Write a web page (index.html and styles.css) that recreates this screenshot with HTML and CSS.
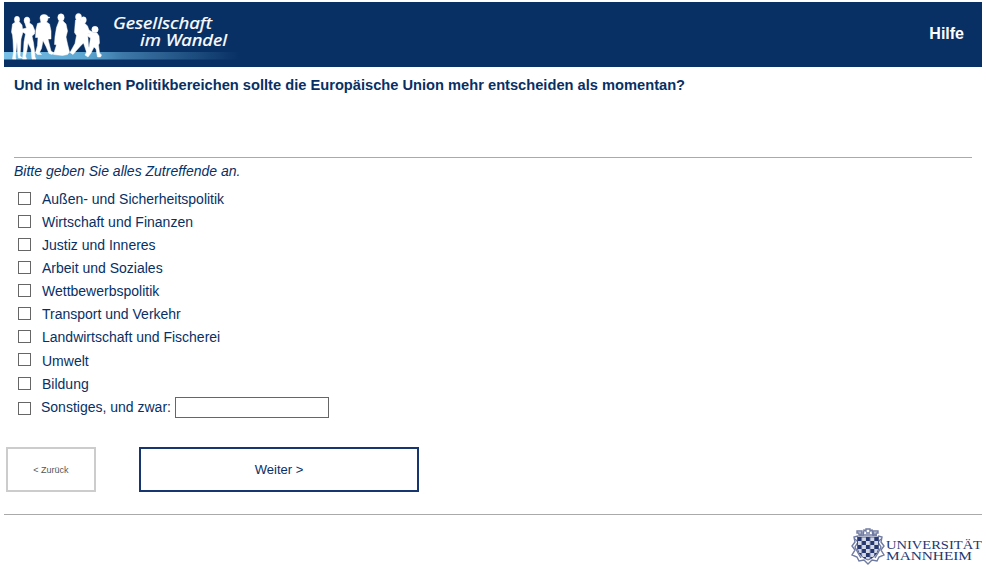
FILE: index.html
```html
<!DOCTYPE html>
<html lang="de">
<head>
<meta charset="utf-8">
<title>Gesellschaft im Wandel</title>
<link rel="stylesheet" href="styles.css">
</head>
<body>
<header class="banner">
  <svg class="brand" viewBox="4 2 240 65" role="img" aria-label="Gesellschaft im Wandel">
    <defs>
      <linearGradient id="band" x1="0" x2="1"><stop offset="0" stop-color="#78c0e8"/><stop offset=".36" stop-color="#5ba4d0"/><stop offset=".5" stop-color="#3e79a9"/><stop offset="1" stop-color="#083064"/></linearGradient>
    </defs>
    <rect x="4" y="52" width="236" height="7.500" fill="url(#band)"/>
    <g fill="#fff" stroke="#fff" stroke-width=".5" stroke-linejoin="round">
      <ellipse cx="17" cy="19.500" rx="2.600" ry="3.200"/>
      <path d="M15.500 22h4l2.500 3 1 7-2 7-.5 10-.5 7 2.500 2h-4l-1-6-.5-10-1 10-.5 5 .5 2h-3.500l1-7-.5-12-.5-5-1-3 1-8z"/>
      <ellipse cx="27" cy="20.500" rx="2.900" ry="3.500"/>
      <path d="M25 23.500l4.500-.5 3 2 2.500 6-.5 3-2.500 2 1.500 7 1 8 .5 6 1 2h-4l-1-10-3-6-1 7-1.500 6 1 3h-4l1-8 .5-9 1.500-8-4-3 1-2 4-1z"/>
      <path d="M40 18q0-3.500 4-3.500 3.500 0 4 2.500h1.500v1H48q0 2.500-1.500 4l3 2 1.500 7v8h-3l1.500 6 1.500 6 3 2-2 1.500-3-1-3-7-3-6-1.500 8-2 4 2 2h-4l-2-2 2-7 .5-8h-2.500l.5-8 1.500-6 3.500-1z"/>
      <ellipse cx="61" cy="17.500" rx="3.200" ry="3.700"/>
      <path d="M59 21h4l3 3 1.500 7-1.500 6 1.500 7 2 8-2 2.500-5 1-9-1 2.500-8 1.500-9-1 7h-2l.5-8 1.500-9z"/>
      <ellipse cx="78.500" cy="17" rx="3" ry="3.600"/>
      <ellipse cx="83.500" cy="20" rx="2.800" ry="3.200"/>
      <path d="M75.500 20h5l4 3 3 3 1.500 4 5 3-1 2-5.500-2 .5 6 .5 7 2 6-1 2-3-2-3-9-3 3-4.500 5-3 3.500-3-2 5-9 1.500-8-2-3 .5-7z"/>
      <circle cx="95" cy="29.500" r="3.200"/>
      <path d="M92.500 33h4.500l2 3 .5 7-1 2 1 8 2 2-1 2h-3l-1.500-8-2-2-3 6-3 4-3-2 4-7 1.500-10-4.500-3 1-2 4 1z"/>
    </g>
    <text class="brand-text" x="113" y="29" textLength="99" lengthAdjust="spacingAndGlyphs">Gesellschaft</text>
    <text class="brand-text" x="140" y="46" textLength="87" lengthAdjust="spacingAndGlyphs">im Wandel</text>
  </svg>
  <a class="help">Hilfe</a>
</header>
<main>
  <h1 class="question">Und in welchen Politikbereichen sollte die Europäische Union mehr entscheiden als momentan?</h1>
  <p class="hint">Bitte geben Sie alles Zutreffende an.</p>
  <div class="options">
    <label><input type="checkbox">Außen- und Sicherheitspolitik</label>
    <label><input type="checkbox">Wirtschaft und Finanzen</label>
    <label><input type="checkbox">Justiz und Inneres</label>
    <label><input type="checkbox">Arbeit und Soziales</label>
    <label><input type="checkbox">Wettbewerbspolitik</label>
    <label><input type="checkbox">Transport und Verkehr</label>
    <label><input type="checkbox">Landwirtschaft und Fischerei</label>
    <label class="shifted"><input type="checkbox">Umwelt</label>
    <label><input type="checkbox">Bildung</label>
    <label class="other"><input type="checkbox"><span>Sonstiges, und zwar:</span><input class="field" type="text"></label>
  </div>
  <div class="actions">
    <button class="back">&lt; Zurück</button>
    <button class="next">Weiter &gt;</button>
  </div>
</main>
<footer>
  <svg class="university" viewBox="850 526 132 40" role="img" aria-label="Universität Mannheim">
    <defs><pattern id="checks" x="857.500" y="537" width="8.400" height="8" patternUnits="userSpaceOnUse"><rect width="8.400" height="8" fill="#d3d8e6"/><path d="M0 0h4.200v8h4.200V4H0z" fill="#26366f"/></pattern></defs>
    <g fill="none" stroke="#707ba2" stroke-width="1.400">
      <path d="M858 536l-4 1 1 5-3 4 3 4-3 5 5 2 2 4 5-1 4 4 4-4 5 1 2-4 5-2-3-5 3-4-3-4 1-5-4-1"/>
      <path d="M855 539l3 3-3 5 3 6 3 5M881 539l-3 3 3 5-3 6-3 5"/>
      <path d="M859 536v-3h-2v-2h5v2h-1v3M874 536v-3h-1v-2h5v2h-2v3M863 536l1-6 2 1v-2h4v2l2-1 1 6M866 533h4M859 535h18"/>
    </g>
    <path d="M857.500 537h21v12q-2 8-10.500 11-8.500-3-10.500-11z" fill="url(#checks)" stroke="#35447a" stroke-width=".8"/>
    <text class="uni-text" x="886" y="549" textLength="96" lengthAdjust="spacingAndGlyphs">UNIVERSITÄT</text>
    <text class="uni-text" x="886" y="560" textLength="86" lengthAdjust="spacingAndGlyphs">MANNHEIM</text>
  </svg>
</footer>
</body>
</html>
```
FILE: styles.css
```css
* { box-sizing: border-box; }
body { margin: 2px 4px 0; background: #fff; color: #083064; font: 14px/16px "Liberation Sans", Arial, sans-serif; }
.banner { display: flex; justify-content: space-between; height: 65px; background: #083064; }
.brand { width: 240px; height: 65px; }
.brand-text { font: italic 400 16px "Noto Sans", sans-serif; fill: #fff; stroke: #fff; stroke-width: .2px; }
.help { padding: 23px 18px 0 0; color: #fff; font-size: 16px; line-height: 18px; font-weight: bold; }
.question { height: 91px; margin: 0 10px; padding-top: 10px; border-bottom: 1px solid #aaa; font-size: 14.67px; line-height: 17px; }
.hint { margin: 5px 10px 8px; font-style: italic; }
.options { height: 233px; padding-left: 14px; }
.options label { display: flex; align-items: center; height: 23px; }
.options input { margin: 0; border: 1px solid #666; background: #fff; }
.options input[type="checkbox"] { appearance: none; width: 13px; height: 13px; margin-right: 11px; }
.options .shifted { margin-top: 1px; }
.options .shifted input[type="checkbox"] { margin-bottom: 2px; }
.options .other input[type="checkbox"] { margin: 3px 10px 0 0; }
.options .other .field { width: 154px; height: 21px; margin: 2px 0 0 4px; }
.actions { display: flex; gap: 43px; height: 45px; margin: 27px 0 0 2px; }
button { padding: 0; background: #fff; font-family: inherit; }
.back { width: 90px; border: 2px solid #ccc; color: #555; font-size: 9px; }
.next { width: 280px; border: 2px solid #17366f; color: #083064; font-size: 13px; }
footer { display: flex; justify-content: flex-end; margin-top: 22px; padding-top: 11px; border-top: 1px solid #aaa; }
.university { width: 132px; height: 40px; }
.uni-text { font: 13.5px "Liberation Serif", serif; fill: #26366f; }
```
